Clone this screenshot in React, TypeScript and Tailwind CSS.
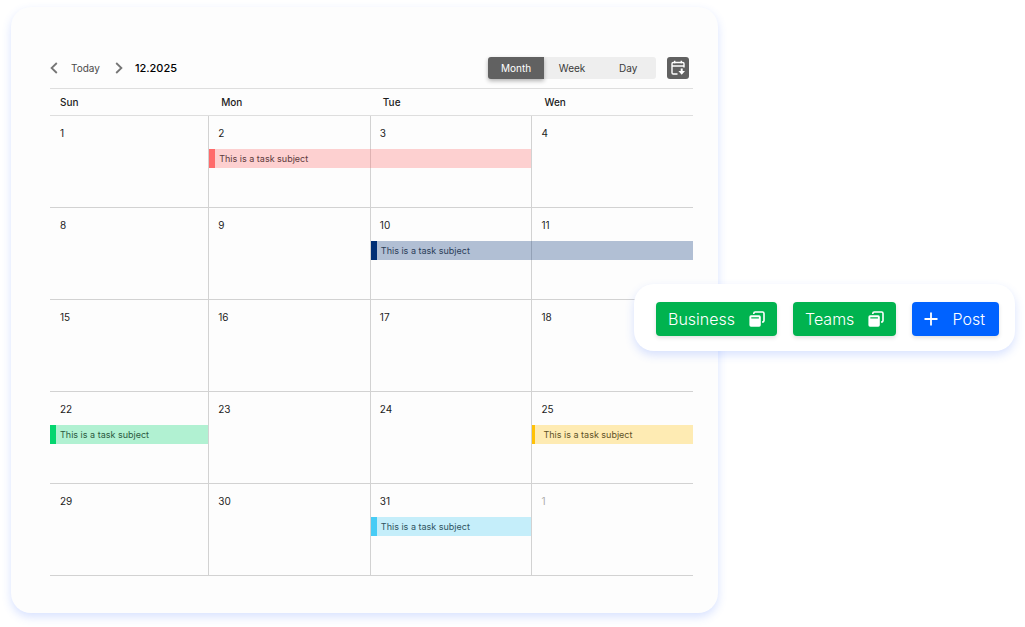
import clsx from "clsx";

type Task = {
  bar: string;
  marker?: string;
  label?: string;
};

type Day = {
  date: number;
  task?: Task;
  muted?: boolean;
};

const SUBJECT = "This is a task subject";

const weekdays = ["Sun", "Mon", "Tue", "Wen"];
const views = ["Month", "Week", "Day"];

// a task without a label continues the bar of the day before
const weeks: Day[][] = [
  [
    { date: 1 },
    {
      date: 2,
      task: {
        bar: "bg-[#ff6b6b]/30 text-[#5c3a3c]",
        marker: "w-[6px] bg-[#ff6b6b]",
        label: SUBJECT,
      },
    },
    { date: 3, task: { bar: "bg-[#ff6b6b]/30" } },
    { date: 4 },
  ],
  [
    { date: 8 },
    { date: 9 },
    {
      date: 10,
      task: {
        bar: "bg-[#002f75]/30 text-[#2b3d58]",
        marker: "w-[6px] bg-[#002f75]",
        label: SUBJECT,
      },
    },
    { date: 11, task: { bar: "bg-[#002f75]/30" } },
  ],
  [{ date: 15 }, { date: 16 }, { date: 17 }, { date: 18 }],
  [
    {
      date: 22,
      task: {
        bar: "bg-[#04d66f]/30 text-[#2b5a41]",
        marker: "w-[6px] bg-[#04d66f]",
        label: SUBJECT,
      },
    },
    { date: 23 },
    { date: 24 },
    {
      date: 25,
      task: {
        bar: "bg-[#ffc107]/30 text-[#5f5226]",
        marker: "w-[3px] mr-[4px] bg-[#ffc107]",
        label: SUBJECT,
      },
    },
  ],
  [
    { date: 29 },
    { date: 30 },
    {
      date: 31,
      task: {
        bar: "bg-[#47ccf5]/30 text-[#2f5461]",
        marker: "w-[6px] bg-[#47ccf5]",
        label: SUBJECT,
      },
    },
    { date: 1, muted: true },
  ],
];

function Chevron({ d }: { d: string }) {
  return (
    <svg width="8" height="12" viewBox="0 0 8 12" fill="none" aria-hidden="true">
      <path d={d} stroke="#757575" strokeWidth="1.8" />
    </svg>
  );
}

function CalendarDownIcon() {
  return (
    <svg width="16" height="16" viewBox="0 0 16 16" fill="none" aria-hidden="true">
      <path
        d="M7.500 14H3.200A1.200 1.200 0 0 1 2 12.800V3.700a1.200 1.200 0 0 1 1.200-1.200h9.600A1.200 1.200 0 0 1 14 3.700V7.500"
        stroke="#fff"
        strokeWidth="1.4"
      />
      <path d="M2 6h12M4.700.8v2.400M11.300.8v2.400" stroke="#fff" strokeWidth="1.4" />
      <path d="M10.700 8.500h2v2.600h2.300l-3.300 3.700-3.300-3.700h2.300Z" fill="#fff" />
    </svg>
  );
}

function CopyIcon() {
  return (
    <svg width="16" height="16" viewBox="0 0 16 16" fill="none" aria-hidden="true">
      <path
        d="M4.800 3v-.6A1.400 1.400 0 0 1 6.200 1h7.400A1.400 1.400 0 0 1 15 2.400v7.200a1.400 1.400 0 0 1-1.400 1.400H13"
        stroke="#fff"
        strokeWidth="1.6"
      />
      <path
        fillRule="evenodd"
        d="M2 4.300h8.200a1.600 1.600 0 0 1 1.600 1.600v8.200a1.600 1.600 0 0 1-1.600 1.600H2a1.600 1.600 0 0 1-1.600-1.600V5.900A1.600 1.600 0 0 1 2 4.300ZM2.300 6.300v1.300h7.600V6.300Z"
        fill="#fff"
      />
    </svg>
  );
}

function PlusIcon() {
  return (
    <svg width="14" height="14" viewBox="0 0 14 14" aria-hidden="true">
      <path d="M7 .5v13M.5 7h13" stroke="#fff" strokeWidth="1.8" />
    </svg>
  );
}

function TaskBar({ task }: { task: Task }) {
  return (
    <div
      className={clsx(
        "flex h-[19px] items-center text-[9px] whitespace-nowrap",
        !task.label && "-ml-px",
        task.bar
      )}
    >
      {task.marker && <span className={clsx("h-full shrink-0", task.marker)} />}
      {task.label && <span className="ml-[4px]">{task.label}</span>}
    </div>
  );
}

function Toolbar() {
  return (
    <div className="flex items-center justify-between">
      <div className="flex items-center text-[#4a4a4a]">
        <button type="button" aria-label="Previous month">
          <Chevron d="M6.800 1 1.600 6l5.200 5" />
        </button>
        <button type="button" className="ml-[13px] text-[10px]">
          Today
        </button>
        <button type="button" aria-label="Next month" className="ml-[15px]">
          <Chevron d="M1.200 1 6.400 6l-5.200 5" />
        </button>
        <span className="ml-[12px] text-[11px] font-medium text-black">12.2025</span>
      </div>
      <div className="flex items-center gap-[11px] pr-[4px]">
        <div className="flex h-[22px] rounded-[3px] bg-[#eeeeee] text-[10px]">
          {views.map((view, i) => (
            <button
              key={view}
              type="button"
              aria-pressed={i === 0}
              className={clsx(
                "w-[56px]",
                i === 0
                  ? "rounded-l-[3px] bg-[#616161] text-white shadow-[0_2px_4px_rgba(0,0,0,0.3)]"
                  : "text-[#3a3a3a]"
              )}
            >
              {view}
            </button>
          ))}
        </div>
        <button
          type="button"
          aria-label="Go to date"
          className="flex size-[22px] items-center justify-center rounded-[3px] bg-[#616161]"
        >
          <CalendarDownIcon />
        </button>
      </div>
    </div>
  );
}

function MonthGrid() {
  return (
    <table className="mt-[9px] w-full table-fixed border-separate border-spacing-0">
      <colgroup>
        <col className="w-[24.6%]" />
        <col />
        <col />
        <col />
      </colgroup>
      <thead>
        <tr>
          {weekdays.map((day) => (
            <th
              key={day}
              scope="col"
              className="h-[28px] border-y border-[#dedede] pl-[13px] text-left text-[10px] font-medium text-[#1c1c1c] first:pl-[10px]"
            >
              {day}
            </th>
          ))}
        </tr>
      </thead>
      <tbody>
        {weeks.map((week, w) => (
          <tr key={w}>
            {week.map((day, d) => (
              <td
                key={day.date}
                className="h-[92px] border-b border-l border-[#d2d2d2] p-0 align-top first:border-l-0"
              >
                <div
                  className={clsx(
                    "pt-[10px] pb-[9px] text-[10px] leading-[14px]",
                    d === 0 ? "pl-[10px]" : "pl-[9px]",
                    day.muted ? "text-[#adadad]" : "text-[#1c1c1c]"
                  )}
                >
                  {day.date}
                </div>
                {day.task && <TaskBar task={day.task} />}
              </td>
            ))}
          </tr>
        ))}
      </tbody>
    </table>
  );
}

function PublishPanel() {
  const button =
    "flex h-[34px] items-center justify-between rounded-[4px] pl-[12px] text-[16px] font-light text-white shadow-[0_2px_4px_rgba(0,0,0,0.12)]";

  return (
    <div className="absolute top-[284px] right-[10px] flex gap-[16px] rounded-[20px] bg-white pt-[18px] pr-[16px] pb-[15px] pl-[22px] shadow-[0_4px_10px_rgba(60,110,255,0.2)]">
      <button type="button" className={clsx(button, "w-[121px] bg-[#00b34f] pr-[12px]")}>
        Business
        <CopyIcon />
      </button>
      <button type="button" className={clsx(button, "w-[103px] bg-[#00b34f] pr-[12px]")}>
        Teams
        <CopyIcon />
      </button>
      <button type="button" className={clsx(button, "w-[87px] bg-[#0062ff] pr-[14px]")}>
        <PlusIcon />
        Post
      </button>
    </div>
  );
}

export default function App() {
  return (
    <div className="relative min-h-screen bg-white px-[11px] pt-[7px] pb-[14px] font-['Inter',sans-serif]">
      <main className="w-[70.5%] rounded-[20px] bg-[#fdfdfd] pt-[50px] pr-[25px] pb-[37px] pl-[39px] shadow-[0_4px_10px_rgba(60,110,255,0.2)]">
        <Toolbar />
        <MonthGrid />
      </main>
      <PublishPanel />
    </div>
  );
}
